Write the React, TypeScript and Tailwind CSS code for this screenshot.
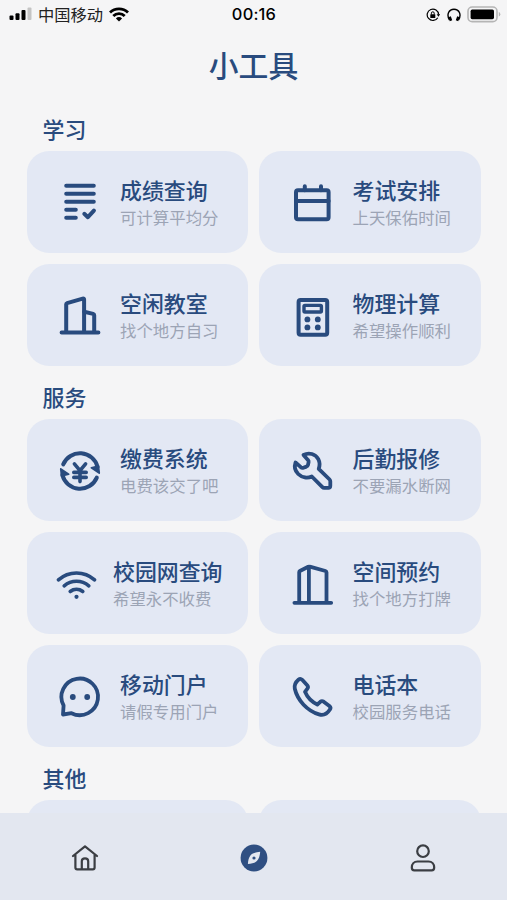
import type { ReactNode } from 'react';

type Tool = {
  title: string;
  desc: string;
  icon: ReactNode;
};

type Section = {
  name: string;
  tools: Tool[];
};

const GradesIcon = (
  <>
    <path d="M6.2 2.8h27.6M6.2 10.8h27.6M6.2 18.8h27.6M6.2 26.8h9.6M6.2 34.8h9.6" />
    <path d="m24.3 30.8 3.6 3.4 6-6.6" />
  </>
);

const CalendarIcon = (
  <>
    <rect x="3" y="7.2" width="32.6" height="29" rx="2" />
    <path d="M3 18h32.6M11.8 3.2v4M28 3.2v4" />
  </>
);

const BuildingIcon = (
  <>
    <path d="M1.6 36.4h36.8M6.2 36V8.3q0-.9.9-1.2l15.6-4.5q1.4-.4 1.4 1V36" />
    <path d="m24.2 15.8 9 2.1q1 .3 1 1.3V36" />
  </>
);

const CalculatorIcon = (
  <>
    <rect x="5.6" y="4" width="28.6" height="34.8" rx="2" />
    <rect x="11" y="9.4" width="17.4" height="6.6" rx="1" strokeWidth="3.4" />
    <g fill="currentColor" stroke="none">
      <circle cx="14.4" cy="23.4" r="2.9" />
      <circle cx="24.8" cy="23.4" r="2.9" />
      <circle cx="14.4" cy="31.4" r="2.9" />
      <circle cx="24.8" cy="31.4" r="2.9" />
    </g>
  </>
);

const PaymentIcon = (
  <>
    <path d="M3.2 13.4A18.2 18.2 0 0 1 37.6 16M36.8 26.6A18.2 18.2 0 0 1 2.4 24" />
    <path d="m31.4 16.8 7-1.8.8 7zM8.6 23.2l-7 1.8-.8-7z" fill="currentColor" strokeWidth="1.8" />
    <path d="m14.4 12.8 5.6 6.8 5.6-6.8M13.8 21.4h12.4M13.8 26.4h12.4M20 19.6v11" strokeWidth="3.6" />
  </>
);

const WrenchIcon = (
  <path
    d="M10.5 4C16 1 22.5 3 25.3 8.2c1.7 3.300 1.5 6.7.4 9.6l10.9 10.7q.7.7.7 1.7v4.6q0 2-2 2h-4.2q-1 0-1.700-.7L18.8 25.5C14.500 27.5 9 26.7 5.2 23 2 19.800 1.200 15.300 2.500 11.500l5.300 4.700q1.200 1 2.600.5l3-1.100q1.200-.5 1.600-1.700l.6-2.700q.3-1.300-.7-2.300z"
    strokeWidth="3.8"
  />
);

const WifiIcon = (
  <>
    <path d="M5.4 15.9a27 27 0 0 1 36.2 0M11.2 21.8a19 19 0 0 1 24.6 0M17.2 27.5a10.5 10.5 0 0 1 12.6 0" strokeWidth="3.6" />
    <circle cx="23.5" cy="32.8" r="2.1" fill="currentColor" stroke="none" />
  </>
);

const SpaceIcon = (
  <>
    <path d="M1.4 38.8h36.8M6.2 38V8.2q0-.8.7-1.2l8.3-4.2q.8-.4 1.6-.1L32.5 7q1 .3 1 1.3V38" strokeWidth="3.8" />
    <path d="M15.9 3v35" strokeWidth="3.8" />
  </>
);

const MessageIcon = (
  <>
    <path d="M3.6 28.5A18.3 18.3 0 1 1 11.5 36.2L3 37.5z" strokeWidth="3.8" />
    <g fill="currentColor" stroke="none">
      <circle cx="12.8" cy="20" r="2.9" />
      <circle cx="27.2" cy="20" r="2.9" />
    </g>
  </>
);

const PhoneIcon = (
  <path
    d="M5.4 2.7q2-1.7 3.8.1l5 5.4q1.5 1.7.2 3.4l-2.4 3.2c2.3 5.4 7 10.2 12.3 12.7l3-2.7q1.6-1.3 3.4-.1l5.7 4.3q1.9 1.6.5 3.5c-2.5 4-6.5 6.2-10.9 4.9C14.5 34 4.5 23.5 1.8 11.8 1 8 2.7 5 5.4 2.7z"
    strokeWidth="3.8"
  />
);

const sections: Section[] = [
  {
    name: '学习',
    tools: [
      { title: '成绩查询', desc: '可计算平均分', icon: GradesIcon },
      { title: '考试安排', desc: '上天保佑时间', icon: CalendarIcon },
      { title: '空闲教室', desc: '找个地方自习', icon: BuildingIcon },
      { title: '物理计算', desc: '希望操作顺利', icon: CalculatorIcon },
    ],
  },
  {
    name: '服务',
    tools: [
      { title: '缴费系统', desc: '电费该交了吧', icon: PaymentIcon },
      { title: '后勤报修', desc: '不要漏水断网', icon: WrenchIcon },
      { title: '校园网查询', desc: '希望永不收费', icon: WifiIcon },
      { title: '空间预约', desc: '找个地方打牌', icon: SpaceIcon },
      { title: '移动门户', desc: '请假专用门户', icon: MessageIcon },
      { title: '电话本', desc: '校园服务电话', icon: PhoneIcon },
    ],
  },
];

function StatusBar() {
  return (
    <header className="grid h-[29px] grid-cols-3 items-center pr-[6px] pl-[9px] text-black">
      <div className="flex items-center">
        <svg viewBox="0 0 23 14" className="h-[14px] w-[23px]" fill="currentColor">
          <rect x="0.5" y="8.5" width="4" height="4.5" rx="1" />
          <rect x="6.5" y="6.3" width="4" height="6.7" rx="1" />
          <rect x="12.5" y="3" width="4" height="10" rx="1" />
          <rect x="18.5" y="0.500" width="4" height="12.500" rx="1" opacity="0.2" />
        </svg>
        <span className="ml-[6px] text-[16.3px] leading-none whitespace-nowrap text-[#222]">中国移动</span>
        <svg viewBox="0 0 20 15" className="ml-[6px] h-[15px] w-[20px]" fill="none" stroke="currentColor" strokeWidth="2.8">
          <path d="M1 5.6a12.8 12.8 0 0 1 18 0M4.3 9a8 8 0 0 1 11.4 0" />
          <path d="M10 14.5 6.9 11.4a4.4 4.4 0 0 1 6.2 0z" fill="currentColor" stroke="none" />
        </svg>
      </div>
      <time className="pr-[2px] text-center font-[Inter,sans-serif] text-[16.4px] leading-none font-medium tracking-[0.2px]">
        00:16
      </time>
      <div className="flex items-center justify-end">
        <svg viewBox="0 0 14 14" className="mt-px h-[14px] w-[14px]" fill="none" stroke="currentColor" strokeWidth="1.2">
          <path d="M11.8 9.7A5.7 5.7 0 1 1 12.6 6.5" />
          <path d="M10.7 6.3h3.5l-1.8 2.5z" fill="currentColor" stroke="none" />
          <rect x="4.3" y="6.2" width="5" height="3.8" rx=".5" fill="currentColor" stroke="none" />
          <path d="M5.4 6.5V5.2a1.4 1.4 0 0 1 2.8 0v1.3" strokeWidth="1" />
        </svg>
        <svg viewBox="0 0 14 14" className="mt-px ml-[7px] h-[14px] w-[14px]" fill="none" stroke="currentColor" strokeWidth="1.4">
          <path d="M2.4 12C-.8 6.5 1.9 1.2 7 1.2S14.8 6.5 11.6 12" />
          <path d="m2.6 8.8 1.4 4M11.4 8.8 10 12.8" strokeWidth="2.6" />
        </svg>
        <svg viewBox="0 0 34 17" className="ml-[6px] h-[17px] w-[34px]">
          <rect x="1" y="1" width="29" height="14.6" rx="4.2" fill="none" stroke="#b5b5b5" strokeWidth="1.6" />
          <rect x="3.6" y="3.6" width="23.4" height="9.6" rx="1.6" fill="#000" />
          <path d="M31.8 6v4.6q1.5-.6 1.5-2.3T31.8 6z" fill="#b5b5b5" />
        </svg>
      </div>
    </header>
  );
}

function ToolCard({ tool }: { tool: Tool }) {
  return (
    <div className="flex h-[102px] items-center justify-center gap-4 rounded-[22px] bg-[#e3e8f4] pl-px">
      <svg
        viewBox="0 0 44 40"
        className="mt-[2px] h-10 w-11 shrink-0 overflow-visible"
        fill="none"
        stroke="currentColor"
        strokeWidth="4"
        strokeLinecap="round"
        strokeLinejoin="round"
      >
        {tool.icon}
      </svg>
      <div className="whitespace-nowrap">
        <h3 className="mb-px text-[21.9px] leading-[29px] font-medium">{tool.title}</h3>
        <p className="-mr-[3px] text-[16.4px] leading-6 text-[#9ca4b5]">{tool.desc}</p>
      </div>
    </div>
  );
}

function TabBar() {
  return (
    <nav className="absolute inset-x-0 bottom-0 grid h-[87px] grid-cols-3 items-center justify-items-center bg-[#e3e7f0] pt-[3px] text-[#3b3e43]">
      <svg viewBox="0 0 28 28" className="h-7 w-7" fill="none" stroke="currentColor" strokeWidth="2.2" strokeLinejoin="round" strokeLinecap="round">
        <path d="M2 12 14 2.3 26 12M4.400 11V23.500q0 1.800 1.800 1.800h15.600q1.800 0 1.800-1.800V11" />
        <path d="M10.800 25v-7.800q0-2.800 3.200-2.800t3.200 2.800V25" />
      </svg>
      <svg viewBox="0 0 28 28" className="h-7 w-7">
        <circle cx="14" cy="14" r="13.4" fill="#2f4f82" />
        <path d="M20.200 7.800C16 8.200 12.400 9.300 10.600 11.200 8.900 13 8 16.500 7.900 20.100c3.700-.2 7.200-1.200 9-3C18.900 15.200 19.900 11.800 20.200 7.800z" fill="#e3e7f0" />
        <circle cx="14" cy="14" r="1.6" fill="#2f4f82" />
      </svg>
      <svg viewBox="0 0 28 28" className="h-7 w-7" fill="none" stroke="currentColor" strokeWidth="2.2">
        <circle cx="14" cy="7.2" r="5.8" />
        <path d="M8.5 17.500h11c3.500 0 5.700 2.700 5.700 6 0 1.900-.8 2.900-2.500 2.900H5.300c-1.700 0-2.500-1-2.500-2.900 0-3.300 2.200-6 5.700-6z" />
      </svg>
    </nav>
  );
}

export default function App() {
  return (
    <div className="relative h-[900px] w-[507px] overflow-hidden bg-[#f5f5f6] font-['Noto_Sans_CJK_SC',sans-serif] text-[#294b7e]">
      <StatusBar />
      <h1 className="h-[83px] pt-[13px] text-center text-[29.8px] leading-[44px] font-medium">小工具</h1>
      <main className="flex flex-col gap-[13.6px] px-[26.5px]">
        {sections.map((section) => (
          <section key={section.name}>
            <h2 className="mb-[6px] pl-4 text-[21.9px] leading-[33px] font-medium">{section.name}</h2>
            <div className="grid grid-cols-2 gap-x-[11px] gap-y-[11.3px]">
              {section.tools.map((tool) => (
                <ToolCard key={tool.title} tool={tool} />
              ))}
            </div>
          </section>
        ))}
        <section>
          <h2 className="mb-[6px] pl-4 text-[21.9px] leading-[33px] font-medium">其他</h2>
          <div className="grid grid-cols-2 gap-x-[11px]">
            <div className="h-[102px] rounded-[22px] bg-[#e3e8f4]" />
            <div className="h-[102px] rounded-[22px] bg-[#e3e8f4]" />
          </div>
        </section>
      </main>
      <TabBar />
    </div>
  );
}
